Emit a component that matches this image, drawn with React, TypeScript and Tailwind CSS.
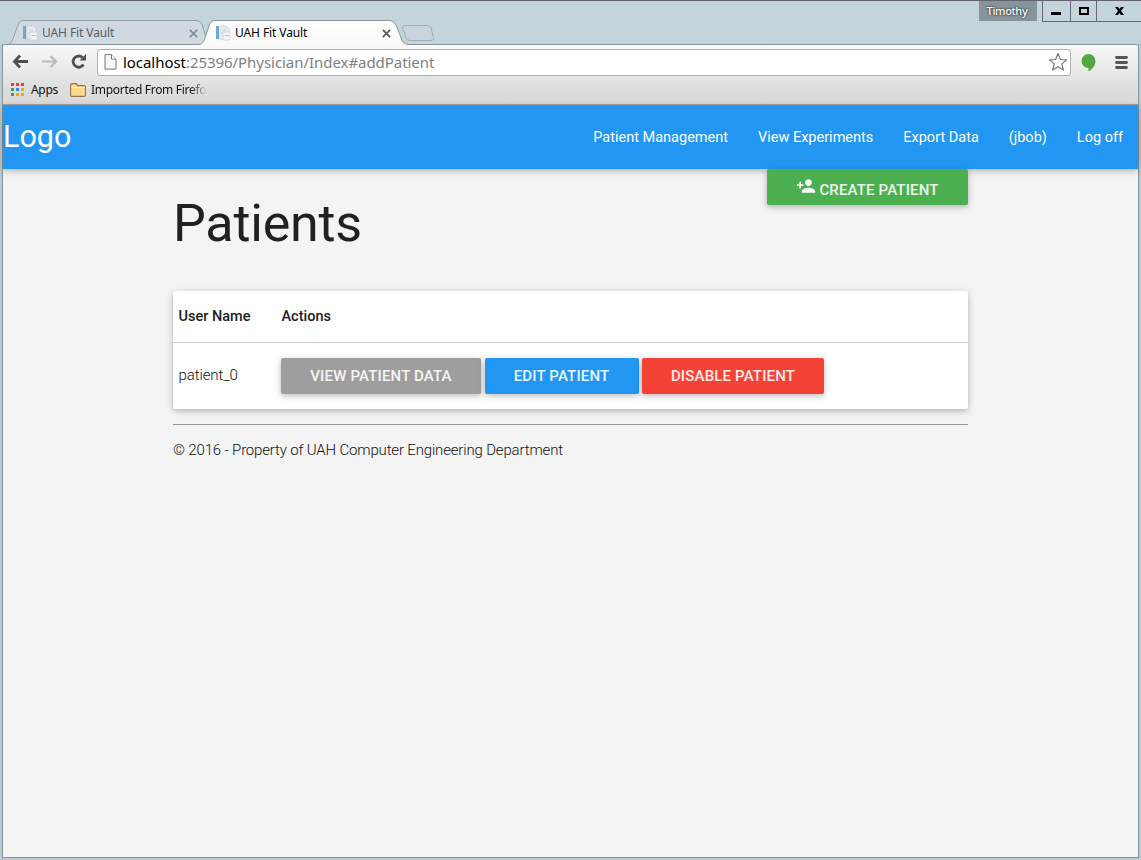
import type { ReactNode } from "react";

const raised = "shadow-[0_2px_5px_0_rgba(0,0,0,0.16),0_2px_10px_0_rgba(0,0,0,0.12)]";

function Favicon() {
  return (
    <svg width="16" height="16" viewBox="0 0 16 16" className="shrink-0">
      <rect x="1" y="1" width="3" height="13" fill="#69a9d2" />
      <path d="M5 1h6l3 3v10H5z" fill="#e9edf1" stroke="#ccd3da" strokeWidth=".7" />
      <path d="M7 5h4M6 8h3" stroke="#c6ced6" />
      <path d="M8 7h7v8H8z" fill="#f3f5f7" stroke="#c8ccd2" strokeWidth=".7" />
      <path d="M9.500 10.500h4.500" stroke="#b9bfc7" />
    </svg>
  );
}

function CloseGlyph({ active }: { active?: boolean }) {
  return (
    <svg width="9" height="9" viewBox="0 0 9 9" className="mr-[0.500px] shrink-0">
      <path d="M.9.9l7.200 7.200M8.100.9L.9 8.100" stroke={active ? "#5a5a5a" : "#858b92"} strokeWidth="1.800" />
    </svg>
  );
}

function TabStrip() {
  return (
    <header className="relative z-10 flex h-[44px] shrink-0 items-start border-t border-[#62636e] bg-[#c3d5db]">
      <svg className="absolute left-0 -top-px" width="1141" height="46" viewBox="0 0 1141 46">
        <defs>
          <linearGradient id="activeTab" x1="0" y1="0" x2="0" y2="1">
            <stop offset="0" stopColor="#ffffff" />
            <stop offset="1" stopColor="#f9f9f9" />
          </linearGradient>
        </defs>
        <path d="M8 44.500C12 43 13 39 15 33L18 25Q19.500 20.500 23 20.500H196Q200 20.500 202 24L208 44.500Z" fill="#d0d8e0" stroke="#95a0a8" />
        <path d="M2.500 48V46.500Q2.500 44.500 4.500 44.500H198C203 44.500 204 41 206 35L209 26Q210.500 20.500 215 20.500H390Q394 20.500 396 25L402 40Q403.500 44.500 409 44.500H1136Q1138.500 44.500 1138.500 47V48Z" fill="url(#activeTab)" stroke="#87959b" />
        <path d="M405.500 25.500H427Q430 25.500 431 28L433.500 37.500Q434 40.500 431 40.500H410Q407 40.500 406 37.500L402.500 28.500Q402 25.500 405.500 25.500Z" fill="#cbd3dc" stroke="#a2adb6" />
      </svg>
      <div className="relative flex h-full w-full font-['Noto_Sans','Open_Sans',sans-serif] text-[12px] leading-[16px]">
        <div className="ml-[22px] mt-6 flex h-4 w-[176px] items-center text-[#565e68]">
          <Favicon />
          <span className="ml-1 flex-1 whitespace-nowrap tracking-[-0.1px]">UAH Fit Vault</span>
          <CloseGlyph />
        </div>
        <div className="ml-[17px] mt-6 flex h-4 w-[176px] items-center text-black">
          <Favicon />
          <span className="ml-1 flex-1 whitespace-nowrap tracking-[-0.1px]">UAH Fit Vault</span>
          <CloseGlyph active />
        </div>
        <div className="ml-auto mr-[5px] h-5 w-[58px] bg-[#87949a] pr-[2px] text-center font-['Noto_Sans','Open_Sans',sans-serif] text-[11px] font-medium leading-[20px] tracking-[-0.35px] text-white [text-shadow:0_0_2px_#333,0_0_2px_#333]">
          Timothy
        </div>
        <div className="flex h-[21px] w-[99px] border-b border-l border-[#656874]">
          <div className="flex w-7 items-center justify-center border-r border-[#656874] pr-[2px]">
            <svg width="10" height="10"><path d="M0 6h10v3H0z" /></svg>
          </div>
          <div className="flex w-[26px] items-center justify-center border-r border-[#656874]">
            <svg width="10" height="8"><path d="M1 1h8v6H1z" fill="none" stroke="black" strokeWidth="2" /></svg>
          </div>
          <div className="flex flex-1 items-center justify-center">
            <svg width="9" height="8" viewBox="0 0 9 8"><path d="M0 0h3l1.500 2L6 0h3L6 4l3 4H6L4.500 6 3 8H0l3-4z" /></svg>
          </div>
        </div>
      </div>
    </header>
  );
}

function Toolbar() {
  return (
    <div className="relative mt-[1px] flex h-[32px] shrink-0 items-center pt-[2px] font-['Noto_Sans','Open_Sans',sans-serif]">
      <svg width="95" height="28" viewBox="0 0 95 28" className="shrink-0" fill="none">
        <path d="M25 13.500H11.500M17 7.500L11.500 13.500l5.500 6" stroke="#505050" strokeWidth="2.800" />
        <path d="M39 13.500H52M47.500 8L53 13.500 47.500 19" stroke="#bcbcbc" strokeWidth="2.200" />
        <path d="M80.500 16.500A5.600 5.600 0 1 1 79.500 9.500" stroke="#505050" strokeWidth="2.800" />
        <path d="M83 6v6.500h-6.500z" fill="#505050" />
      </svg>
      <div className="-ml-px flex h-[27px] w-[974px] shrink-0 items-center rounded-[3px] border border-[#b0b0b0] bg-white">
        <svg width="13" height="16" viewBox="0 0 13 16" className="ml-1.5 shrink-0">
          <path d="M1 .6h6.500l4.500 4.500v10H1z" fill="#f7f7f7" stroke="#777" />
          <path d="M7.500.6v4.500H12" fill="#fff" stroke="#777" />
        </svg>
        <span className="ml-1.5 flex-1 whitespace-nowrap text-[15px] leading-5 tracking-[-0.05px] text-[#808080]">
          <span className="text-black">localhost</span>:25396/Physician/Index#addPatient
        </span>
        <svg width="20" height="20" viewBox="0 0 20 20" className="mr-[2px] shrink-0">
          <path d="M10 1.500l2.400 6 6.200.4-4.800 4 1.600 6.200L10 14.700l-5.400 3.400 1.600-6.200-4.800-4 6.200-.4z" fill="white" stroke="#777" strokeWidth="1.200" strokeLinejoin="round" />
        </svg>
      </div>
      <svg width="15" height="18" viewBox="0 0 15 18" className="ml-[10px] mt-px shrink-0">
        <path d="M7.500 0a7 7 0 0 1 7 7c0 5-3.500 8.500-7 10.500V14A7 7 0 0 1 7.500 0z" fill="#54a83f" />
      </svg>
      <svg width="13" height="13" viewBox="0 0 13 13" className="ml-[19px] shrink-0">
        <path d="M1.500 1.500h10M1.500 6.500h10M1.500 11.500h10" stroke="#555" strokeWidth="2.800" strokeLinecap="round" />
      </svg>
    </div>
  );
}

const appColors = ["#f23a36", "#f23a36", "#f23a36", "#2fa45a", "#2f86ef", "#f5a800", "#2fa45a", "#f5a800", "#f5a800"];

function Bookmarks() {
  return (
    <div className="flex h-[27px] shrink-0 items-center pb-px pl-[8px] font-['Noto_Sans','Open_Sans',sans-serif] text-[12px] leading-4 text-[#111]">
      <div className="mb-[2px] grid grid-cols-3 gap-[2px]">
        {appColors.map((c, i) => (
          <span key={i} className="size-[3px]" style={{ backgroundColor: c }} />
        ))}
      </div>
      <span className="ml-[7px] w-[28px] whitespace-nowrap tracking-[-0.3px]">Apps</span>
      <svg width="16" height="14" viewBox="0 0 16 14" className="ml-[11px] shrink-0">
        <path d="M.6 12V2Q.6.6 2 .6h4.200L7.500 2.600H14q1.400 0 1.400 1.400v8q0 1.400-1.400 1.400H2Q.6 13.400.6 12z" fill="#fbd88c" stroke="#96714a" strokeWidth="1.100" />
        <path d="M1.200 5V4h13.600v1z" fill="#fff0c9" />
      </svg>
      <span className="ml-[5px] whitespace-nowrap tracking-[-0.3px] [mask-image:linear-gradient(to_right,black_100px,transparent_116px)]">Imported From Firefox</span>
    </div>
  );
}

function Button({ className, children }: { className: string; children: ReactNode }) {
  return (
    <button className={`flex h-9 items-center justify-center whitespace-nowrap rounded-[2px] text-[15px] font-medium uppercase tracking-[0.16px] text-white/90 ${raised} ${className}`}>
      {children}
    </button>
  );
}

function Page() {
  return (
    <div className="flex-1 bg-[#f4f4f4] font-[Roboto,sans-serif] text-[15px] font-light text-[#111]">
      <nav className={`flex h-16 items-center bg-[#2196f3] pr-[15px] text-white ${raised}`}>
        <a className="flex-1 text-[30.500px] font-normal leading-[66px]">Logo</a>
        <div className="flex gap-[30px] whitespace-nowrap pt-[2px] text-[14.500px] font-normal leading-[64px]">
          <a>Patient Management</a>
          <a>View Experiments</a>
          <a>Export Data</a>
          <a>(jbob)</a>
          <a>Log off</a>
        </div>
      </nav>
      <main className="ml-[170px] w-[795px]">
        <div className="flex h-[122px] items-start justify-between">
          <h1 className="mt-[23px] text-[52px] font-normal leading-[64px] tracking-[-0.2px] text-[#212121]">Patients</h1>
          <Button className="w-[201px] bg-[#4caf50]">
            <svg width="20" height="20" viewBox="0 0 24 24" fill="white" className="-mt-[2px] mr-[3px]">
              <path d="M15 12c2.210 0 4-1.790 4-4s-1.790-4-4-4-4 1.790-4 4 1.790 4 4 4zm-9-2V7H4v3H1v2h3v3h2v-3h3v-2H6zm9 4c-2.670 0-8 1.340-8 4v2h16v-2c0-2.660-5.330-4-8-4z" />
            </svg>
            <span className="mt-[7px]">Create Patient</span>
          </Button>
        </div>
        <section className={`h-[118px] rounded-[2px] bg-white ${raised}`}>
          <div className="flex h-[52px] items-center border-b border-[#d0d0d0] pl-[5.500px] text-[14.500px] font-medium text-[#212121]">
            <span className="w-[103px]">User Name</span>
            <span>Actions</span>
          </div>
          <div className="flex h-[66px] items-center pl-[5px]">
            <span className="w-[103px] pb-[2px] pl-[0.500px] tracking-[-0.1px]">patient_0</span>
            <Button className="mr-1 w-[200px] bg-[#9e9e9e]">View Patient Data</Button>
            <Button className="mr-[3px] w-[154px] bg-[#2196f3] pr-px">Edit Patient</Button>
            <Button className="w-[182px] bg-[#f44336]">Disable Patient</Button>
          </div>
        </section>
        <hr className="mt-[15px] border-t border-[#999]" />
        <footer className="mt-[14px] leading-[22px] tracking-[-0.165px]">© 2016 - Property of UAH Computer Engineering Department</footer>
      </main>
    </div>
  );
}

export default function App() {
  return (
    <div className="flex h-[860px] w-[1141px] flex-col overflow-hidden bg-[#b9ccd3]">
      <TabStrip />
      <div className="relative mx-[2px] mb-[2px] flex flex-1 flex-col border-x border-b border-[#87959b] bg-[#dedede]">
        <div className="flex h-[61px] shrink-0 flex-col border-b border-[#a5a5a5] bg-linear-to-b from-[#f9f9f9] to-[#dcdcdc] to-80%">
          <Toolbar />
          <Bookmarks />
        </div>
        <Page />
      </div>
    </div>
  );
}
